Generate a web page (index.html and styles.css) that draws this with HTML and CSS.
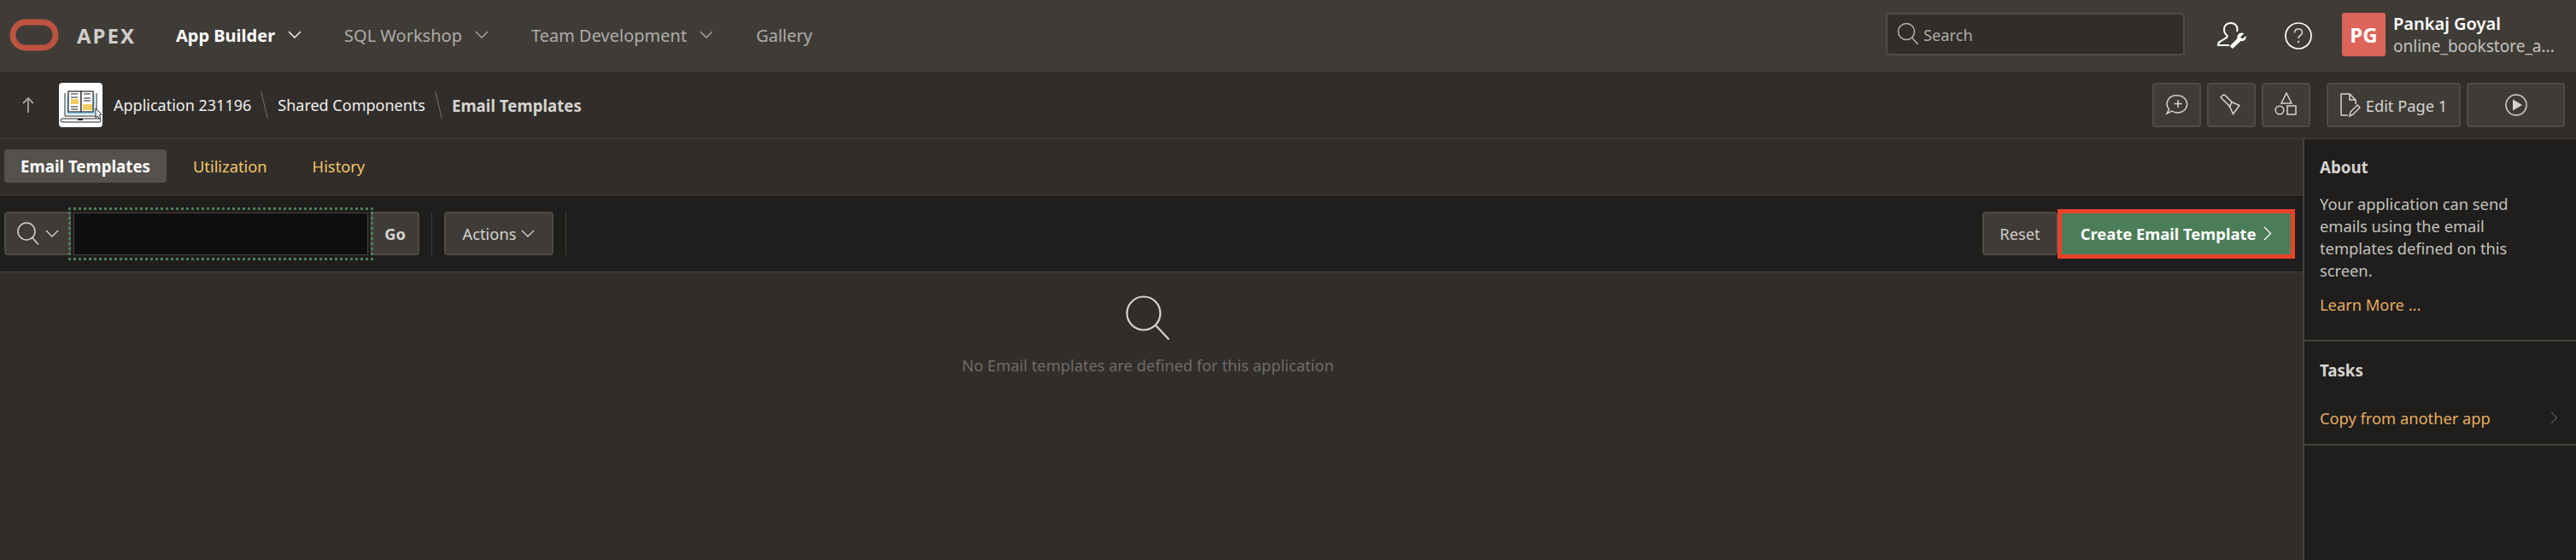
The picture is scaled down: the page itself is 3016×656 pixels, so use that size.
FILE: index.html
```html
<!DOCTYPE html>
<html lang="en">
<head>
    <meta charset="UTF-8">
    <title>Email Templates</title>
    <link rel="stylesheet" href="styles.css">
</head>
<body>
    <header class="topbar">
        <svg class="logo" width="58" height="38" viewBox="0 0 58 38"><rect x="4" y="4" width="50" height="30" rx="15" fill="none" stroke="#bd5340" stroke-width="7"/></svg>
        <span class="brand">APEX</span>
        <nav class="mainnav">
            <a class="navitem active">App Builder <svg class="chev" width="16" height="10" viewBox="0 0 16 10"><path d="M1 1l7 7 7-7" fill="none" stroke="currentColor" stroke-width="1.3"/></svg></a>
            <a class="navitem">SQL Workshop <svg class="chev" width="16" height="10" viewBox="0 0 16 10"><path d="M1 1l7 7 7-7" fill="none" stroke="currentColor" stroke-width="1.3"/></svg></a>
            <a class="navitem">Team Development <svg class="chev" width="16" height="10" viewBox="0 0 16 10"><path d="M1 1l7 7 7-7" fill="none" stroke="currentColor" stroke-width="1.3"/></svg></a>
            <a class="navitem">Gallery</a>
        </nav>
        <div class="searchbox">
            <svg width="28" height="30" viewBox="0 0 28 30"><circle cx="12" cy="12" r="9.5" fill="none" stroke="#b5b3af" stroke-width="1.5"/><path d="M18.5 19l7 8" stroke="#b5b3af" stroke-width="1.5"/></svg>
            <span>Search</span>
        </div>
        <svg class="usertool" width="36" height="34" viewBox="0 0 36 34" fill="none" stroke="#fff" stroke-width="2"><path d="M17 2c-5 0-8 3-8 7.500 0 3 1.500 5.500 3.500 7 .5 1.500 0 2.500-2 3.500l-6 3.500c-2 1-2.500 2.500-2.500 4.500H15"/><path d="M17 2c4.500 0 7.500 3 7.500 7 0 1-.2 2-.5 3"/><path d="M32 14.500l-4 4 2.500 2 4-3.500c1 3-1.500 7-6 6L19 32l-3.500-3 9-9c-1-4.500 3-8 7.500-6z" fill="#fff" stroke="none"/></svg>
        <svg class="help" width="32" height="32" viewBox="0 0 32 32"><circle cx="16" cy="16" r="15" fill="none" stroke="#fff" stroke-width="1.7"/><path d="M11.500 12.500c0-3 2-4.500 4.500-4.500s4.500 1.500 4.500 4c0 3.500-4.500 3.500-4.500 7" fill="none" stroke="#d6d4d0" stroke-width="1.600"/><circle cx="16" cy="23" r="1.200" fill="#d6d4d0"/></svg>
        <div class="avatar">PG</div>
        <div class="userinfo">
            <div class="username">Pankaj Goyal</div>
            <div class="userapp">online_bookstore_a...</div>
        </div>
    </header>

    <div class="crumbbar">
        <svg class="uparrow" width="16" height="20" viewBox="0 0 16 20"><path d="M8 19V2M2 8l6-6 6 6" fill="none" stroke="#a5a3a0" stroke-width="1.800"/></svg>
        <svg class="appicon" width="51" height="52" viewBox="0 0 51 52">
            <rect width="51" height="52" rx="4" fill="#fff"/>
            <rect x="9" y="13" width="33" height="24" fill="#a5d8f3"/>
            <path d="M7 12v27h37V12" fill="none" stroke="#222" stroke-width="1"/>
            <rect x="11" y="10" width="15" height="24" fill="#fff" stroke="#222" stroke-width="1.200"/>
            <rect x="26" y="10" width="14" height="24" fill="#fff" stroke="#222" stroke-width="1.200"/>
            <path d="M14 13h8M14 17h8M14 28h8M14 31h8M29 13h8M29 18h8M29 21h8" stroke="#222" stroke-width="1.200"/>
            <rect x="14" y="19" width="9" height="6" fill="#f6cd5e"/>
            <rect x="28" y="25" width="11" height="7" fill="#f6cd5e"/>
            <path d="M43 30l7 7-3 1 2 3-2 1-2-3-2 2z" fill="#fff" stroke="#222"/>
            <rect x="2" y="42" width="47" height="4" rx="2" fill="#fff" stroke="#222"/>
            <rect x="22" y="42" width="6" height="2" fill="#222"/>
        </svg>
        <a class="crumb">Application 231196</a>
        <span class="crumbsep"></span>
        <a class="crumb">Shared Components</a>
        <span class="crumbsep"></span>
        <span class="crumb current">Email Templates</span>
        <div class="pagebtns">
            <button class="pbtn square"><svg width="28" height="28" viewBox="0 0 28 28" fill="none" stroke="#d6d4d0" stroke-width="1.500"><path d="M15 3a11 10 0 1 1-7 18l-6 3 2.500-5A10.500 10 0 0 1 15 3z"/><path d="M15 8v9M10.500 12.500h9"/></svg></button>
            <button class="pbtn square"><svg width="28" height="28" viewBox="0 0 28 28" fill="none" stroke="#d6d4d0" stroke-width="1.500"><path d="M1 5l3-3 2 .5 8 8 9 4-7.500 10-4-9-8-8z"/><path d="M14 10.500L11 17"/></svg></button>
            <button class="pbtn square"><svg width="28" height="30" viewBox="0 0 28 30" fill="none" stroke="#d6d4d0" stroke-width="1.500"><path d="M14 1l6 12H8z"/><circle cx="6" cy="21" r="4.800"/><rect x="15" y="16" width="10" height="10"/></svg></button>
            <button class="pbtn edit"><svg width="24" height="28" viewBox="0 0 24 28" fill="none" stroke="#d6d4d0" stroke-width="1.500"><path d="M9 26H1V1h10l7 7v5"/><path d="M11 1v7h7"/><path d="M11 27l1-5 8-8 3 3-8 8z"/></svg>Edit Page 1</button>
            <button class="pbtn run"><svg width="26" height="26" viewBox="0 0 26 26"><circle cx="13" cy="13" r="12" fill="none" stroke="#d6d4d0" stroke-width="1.500"/><path d="M9 6.500l11 6.500-11 6.500z" fill="#d6d4d0"/></svg></button>
        </div>
    </div>

    <div class="page">
        <main class="content">
            <div class="tabs">
                <a class="tab selected">Email Templates</a>
                <a class="tab">Utilization</a>
                <a class="tab">History</a>
            </div>
            <div class="toolbar">
                <button class="btn searchbtn">
                    <svg width="28" height="30" viewBox="0 0 28 30"><circle cx="12" cy="12" r="10" fill="none" stroke="#d6d4d0" stroke-width="1.500"/><path d="M19 19.500l7 8" stroke="#d6d4d0" stroke-width="1.500"/></svg>
                    <svg width="16" height="10" viewBox="0 0 16 10"><path d="M1 1l7 7 7-7" fill="none" stroke="#d6d4d0" stroke-width="1.300"/></svg>
                </button>
                <div class="focusring"><div class="searchinput"></div></div>
                <button class="btn gobtn">Go</button>
                <span class="sep"></span>
                <button class="btn actions">Actions <svg width="16" height="10" viewBox="0 0 16 10"><path d="M1 1l7 7 7-7" fill="none" stroke="#d6d4d0" stroke-width="1.300"/></svg></button>
                <span class="sep"></span>
                <button class="btn reset">Reset</button>
                <button class="createbtn">Create Email Template <svg width="10" height="17" viewBox="0 0 10 17"><path d="M1 1l7.500 7.500L1 16" fill="none" stroke="#fff" stroke-width="1.300"/></svg></button>
            </div>
            <div class="nodata">
                <svg width="52" height="52" viewBox="0 0 52 52"><circle cx="21" cy="21" r="19.500" fill="none" stroke="#d6d4d0" stroke-width="2.200"/><path d="M35 35l15 16" stroke="#d6d4d0" stroke-width="2.200" stroke-linecap="round"/></svg>
                <p>No Email templates are defined for this application</p>
            </div>
        </main>
        <aside class="sidebar">
            <section class="sidesec about">
                <h3>About</h3>
                <p>Your application can send emails using the email templates defined on this screen.</p>
                <a class="sidelink">Learn More ...</a>
            </section>
            <section class="sidesec tasks">
                <h3>Tasks</h3>
                <a class="taskrow">Copy from another app <svg width="9" height="15" viewBox="0 0 9 15"><path d="M1 1l6.500 6.500L1 14" fill="none" stroke="#55534f" stroke-width="1.300"/></svg></a>
            </section>
        </aside>
    </div>
</body>
</html>
```
FILE: styles.css
```css
* {
    box-sizing: border-box;
}
html, body {
    height: 100%;
}
body {
    margin: 0;
    height: 656px;
    overflow: hidden;
    display: flex;
    flex-direction: column;
    background-color: #312d2a;
    color: #d6d4d0;
    font-family: "Noto Sans", "Open Sans", sans-serif;
    font-size: 18.3px;
}
button {
    font: inherit;
    color: inherit;
}

/* top bar */
.topbar {
    height: 84px;
    flex: none;
    display: flex;
    align-items: center;
    background-color: #3f3c37;
    padding-left: 11px;
}
.logo {
    margin-bottom: 2px;
}
.brand {
    margin-left: 21px;
    margin-bottom: 2px;
    font-size: 24px;
    font-weight: 700;
    letter-spacing: 2px;
    color: #cfcdc9;
    width: 116px;
}
.mainnav {
    display: flex;
    gap: 50px;
    width: 2002px;
    flex: none;
    font-size: 20px;
    margin-bottom: 2px;
}
.navitem {
    display: flex;
    align-items: center;
    gap: 15px;
    color: #aeaca8;
}
.navitem.active {
    color: #fff;
    font-weight: 700;
}
.searchbox {
    width: 350px;
    height: 50px;
    margin-top: -4px;
    flex: none;
    display: flex;
    align-items: center;
    gap: 4px;
    padding-left: 10px;
    background-color: #312d2a;
    border: 2px solid #4f4c47;
    border-radius: 5px;
    color: #aeaca8;
}
.usertool {
    margin-left: 37px;
}
.help {
    margin-left: 44px;
}
.avatar {
    width: 51px;
    height: 51px;
    margin-left: 35px;
    margin-top: -3px;
    border-radius: 3px;
    background-color: #dc645a;
    color: #fff;
    font-weight: 700;
    font-size: 24px;
    display: flex;
    align-items: center;
    justify-content: center;
}
.userinfo {
    margin-left: 9px;
    margin-top: -2px;
    line-height: 26px;
    white-space: nowrap;
}
.username {
    color: #fff;
    font-weight: 600;
    font-size: 20px;
}
.userapp {
    color: #c4c2be;
    font-size: 19px;
}

/* breadcrumb bar */
.crumbbar {
    height: 79px;
    flex: none;
    display: flex;
    align-items: center;
    padding-left: 25px;
    padding-right: 13px;
    border-bottom: 1px solid #45423e;
}
.appicon {
    margin-left: 28px;
    margin-right: 13px;
}
.crumb {
    color: #f0efed;
    font-size: 18px;
}
.crumb.current {
    font-weight: 700;
    font-size: 18.7px;
    color: #d6d4d0;
}
.crumbsep {
    width: 1px;
    height: 32px;
    margin: 0 15px;
    background-color: #77746f;
    transform: rotate(-14deg);
}
.pagebtns {
    margin-left: auto;
    display: flex;
    gap: 7px;
}
.pbtn {
    height: 52px;
    display: flex;
    align-items: center;
    justify-content: center;
    gap: 6px;
    padding: 0;
    background-color: #3f3c37;
    border: 2px solid #4f4c47;
    border-radius: 4px;
}
.pbtn.square {
    width: 57px;
}
.pbtn.edit {
    width: 157px;
    margin-left: 12px;
}
.pbtn.run {
    width: 115px;
}

/* page body */
.page {
    flex: 1;
    display: flex;
    min-height: 0;
}
.content {
    flex: 1;
    min-width: 0;
}
.tabs {
    height: 65px;
    display: flex;
    align-items: center;
    gap: 9px;
    padding-left: 5px;
    padding-bottom: 2px;
}
.tab {
    height: 39px;
    padding: 0 22px;
    display: flex;
    align-items: center;
    color: #f0c766;
    border-radius: 4px;
}
.tab.selected {
    background-color: #55514c;
    color: #fff;
    font-weight: 700;
    font-size: 18.7px;
    padding: 0 19px;
}
.toolbar {
    height: 91px;
    display: flex;
    align-items: center;
    padding: 0 9px 0 5px;
    background-color: #1f1e1c;
    border-top: 1px solid #45423e;
    border-bottom: 1px solid #45423e;
}
.btn {
    height: 51px;
    display: flex;
    align-items: center;
    justify-content: center;
    gap: 6px;
    padding: 0;
    background-color: #3f3c37;
    border: 2px solid #4f4c47;
    border-radius: 4px;
}
.searchbtn {
    width: 78px;
    border-radius: 4px 0 0 4px;
}
.focusring {
    width: 357px;
    height: 62px;
    margin-left: -3px;
    padding: 3px;
    position: relative;
    border: 3px dotted #4b7d58;
    z-index: 1;
}
.searchinput {
    height: 100%;
    background-color: #100f0e;
    border: 1px solid #45423e;
}
.gobtn {
    width: 57px;
    margin-left: -3px;
    font-weight: 700;
    border-radius: 0 4px 4px 0;
}
.sep {
    width: 1px;
    height: 51px;
    background-color: #3f3c37;
    margin: 0 14px;
}
.actions {
    width: 128px;
}
.reset {
    width: 88px;
    margin-left: auto;
    color: #cfcdc9;
}
.createbtn {
    width: 278px;
    height: 58px;
    display: flex;
    align-items: center;
    justify-content: center;
    gap: 9px;
    padding: 0;
    background-color: #4b7d58;
    border: 5px solid #e8432a;
    color: #fff;
    font-weight: 700;
    font-size: 18.4px;
}
.nodata {
    display: flex;
    flex-direction: column;
    align-items: center;
    padding-top: 27px;
    padding-right: 8px;
}
.nodata p {
    margin: 17px 0 0;
    color: #6f6c68;
}

/* right column */
.sidebar {
    width: 320px;
    flex: none;
    background-color: #1f1e1c;
    border-left: 2px solid #45423e;
}
.sidesec {
    padding: 0 21px 0 18px;
    border-bottom: 2px solid #45423e;
}
.sidesec h3 {
    margin: 0;
    font-size: 18.7px;
    font-weight: 700;
    color: #d6d4d0;
}
.about {
    height: 237px;
    padding-top: 20px;
}
.about p {
    margin: 18px 0 14px;
    line-height: 26px;
    color: #c4c2be;
}
.sidelink {
    color: #e5ac60;
}
.tasks {
    height: 122px;
    padding-top: 21px;
}
.taskrow {
    margin-top: 31px;
    display: flex;
    align-items: center;
    justify-content: space-between;
    color: #e5ac60;
}
```
